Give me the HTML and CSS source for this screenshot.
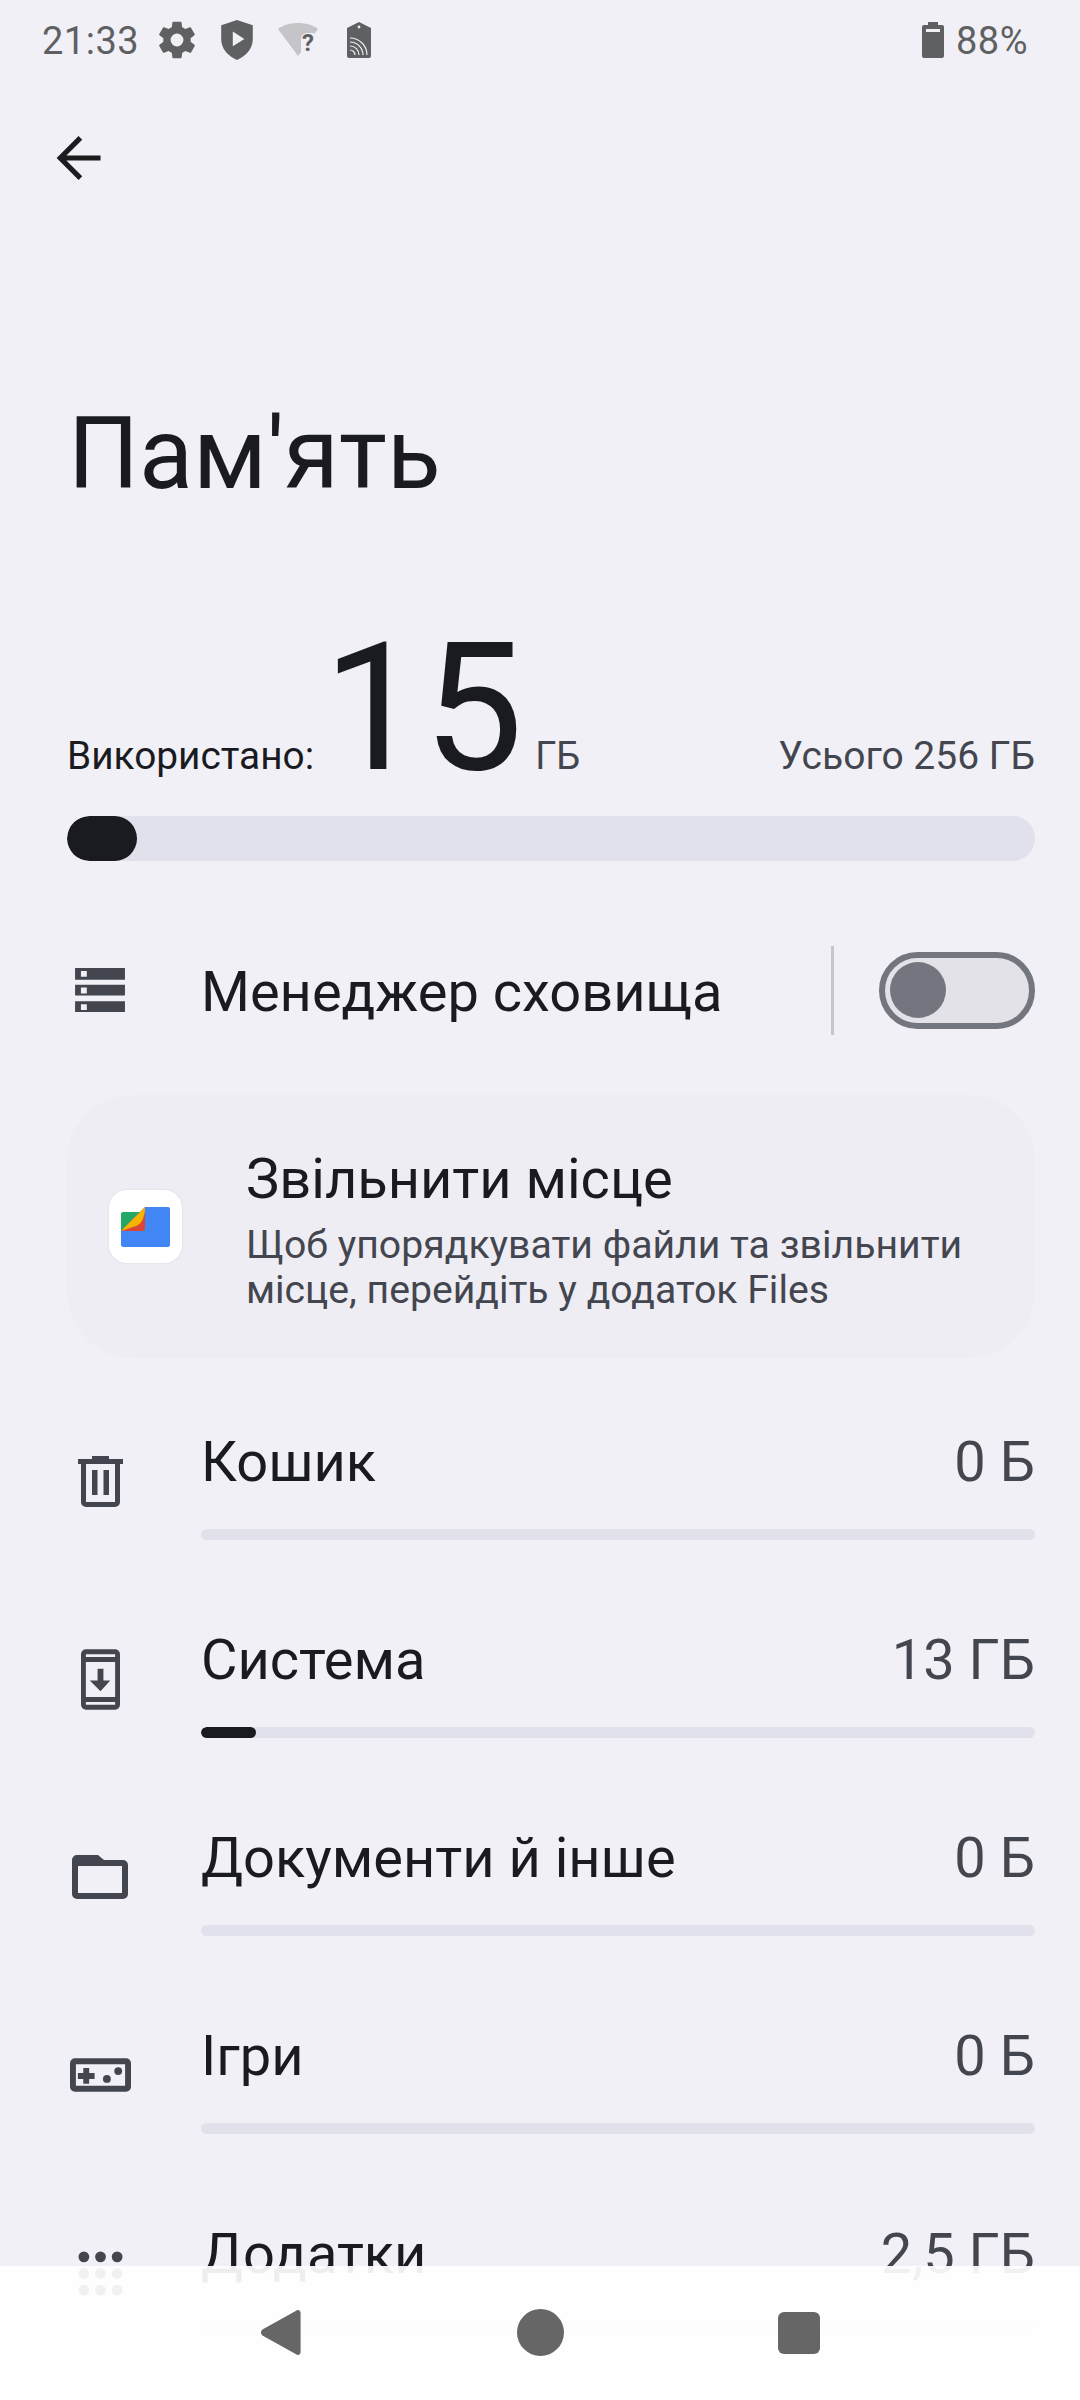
FILE: index.html
```html
<!DOCTYPE html>
<html lang="uk">
<head>
<meta charset="utf-8">
<title>Пам'ять</title>
<link rel="stylesheet" href="styles.css">
</head>
<body>
<div class="page">
  <div class="status">
    <div class="status-left">
      <span class="time">21:33</span>
      <svg class="si gear" viewBox="0 0 24 24"><path fill="#5f6062" fill-rule="evenodd" d="M19.4 13c.04-.33.1-.66.1-1s-.06-.67-.1-1l2.1-1.65c.2-.15.25-.42.12-.64l-2-3.46c-.12-.22-.39-.3-.61-.22l-2.49 1c-.52-.4-1.08-.73-1.69-.98l-.38-2.65A.49.49 0 0 0 14 2h-4c-.25 0-.46.18-.49.42l-.38 2.65c-.61.25-1.17.59-1.69.98l-2.49-1c-.23-.09-.49 0-.61.22l-2 3.46c-.13.22-.07.49.12.64L4.57 11c-.04.33-.07.66-.07 1s.03.67.07 1l-2.11 1.65c-.19.15-.24.42-.12.64l2 3.46c.12.22.39.3.61.22l2.49-1c.52.4 1.08.73 1.69.98l.38 2.65c.03.24.24.42.49.42h4c.25 0 .46-.18.49-.42l.38-2.65c.61-.25 1.17-.59 1.69-.98l2.49 1c.23.09.49 0 .61-.22l2-3.46c.12-.22.07-.49-.12-.64L19.4 13zM12 15.5a3.5 3.5 0 1 1 0-7 3.5 3.5 0 0 1 0 7z"/></svg>
      <svg class="si shield" viewBox="0 0 30 38"><path fill="#5f6062" fill-rule="evenodd" d="M15 0 30 5v13c0 9-6 16-15 20C6 34 0 27 0 18V5L15 0zM11 11v14l11-7-11-7z"/></svg>
      <svg class="si wifi" viewBox="0 0 40 40"><path fill="#c5c5c9" d="M0 9C5 5 12 3 20 3s15 2 20 6L20 36 0 9z"/><rect x="23" y="13" width="17" height="27" rx="6" fill="#f1f0f7"/><text x="24" y="31" class="q">?</text></svg>
      <svg class="si sim" viewBox="0 0 24 36"><path fill="#5f6062" d="M12 0 24 6v28a2 2 0 0 1-2 2H2a2 2 0 0 1-2-2V6z"/><circle cx="12" cy="5" r="1.4" fill="#f1f0f7"/><g fill="none" stroke="#f1f0f7" stroke-width="1.2"><path d="M3 16a17 17 0 0 1 17 17"/><path d="M3 20a13 13 0 0 1 13 13"/><path d="M3 24a9 9 0 0 1 9 9"/><path d="M3 28a5 5 0 0 1 5 5"/></g></svg>
    </div>
    <div class="status-right">
      <svg class="si batt" viewBox="0 0 22 36"><path fill="#5f6062" d="M6 0h10v3h4a2 2 0 0 1 2 2v29a2 2 0 0 1-2 2H2a2 2 0 0 1-2-2V5a2 2 0 0 1 2-2h4z"/><rect x="4" y="7" width="14" height="3" fill="#f1f0f7"/></svg>
      <span class="pct">88%</span>
    </div>
  </div>

  <div class="topbar">
    <svg class="back" viewBox="0 0 48 48"><path fill="none" stroke="#1c1c1e" stroke-width="5.4" d="M47 24H6M26 3 5 24l21 21"/></svg>
  </div>

  <h1 class="title">Пам'ять</h1>

  <div class="usage">
    <div class="usage-line">
      <span class="used-label">Використано:</span>
      <span class="used-num">15</span>
      <span class="used-unit">ГБ</span>
      <span class="total">Усього 256 ГБ</span>
    </div>
    <div class="track big"><div class="fill" style="width:70px"></div></div>
  </div>

  <div class="manager">
    <div class="ico">
      <svg viewBox="0 0 52 46" class="ic-storage"><path fill="#44464f" fill-rule="evenodd" d="M0 0h51v12H0zM6 3v6h6V3zM0 17h51v11H0zM6 20v6h6v-6zM0 34h51v11H0zM6 37v6h6v-6z"/></svg>
    </div>
    <span class="manager-label">Менеджер сховища</span>
    <span class="divider"></span>
    <span class="switch"><span class="knob"></span></span>
  </div>

  <div class="card">
    <div class="app-icon">
      <svg viewBox="0 0 49 40" class="files"><path fill="#4285f4" d="M24 0h23a2 2 0 0 1 2 2v36a2 2 0 0 1-2 2H2a2 2 0 0 1-2-2V24h24z"/><path fill="#24a866" d="M2 5h22v19H0V7a2 2 0 0 1 2-2z"/><path fill="#db4437" d="M24 0v21a3 3 0 0 1-3 3H0z"/><path fill="#f4b400" d="M24 0c0 3 0 5-1 8-1 5-3 9-8 11L0 24z"/></svg>
    </div>
    <div class="card-text">
      <div class="card-title">Звільнити місце</div>
      <div class="card-desc">Щоб упорядкувати файли та звільнити місце, перейдіть у додаток Files</div>
    </div>
  </div>

  <div class="rows">
    <div class="row">
      <div class="ico"><svg viewBox="0 0 45 51" class="ic-trash"><path fill="#44464f" fill-rule="evenodd" d="M14 0h17v3h14v5h-3v38a5 5 0 0 1-5 5H8a5 5 0 0 1-5-5V8H0V3h14zM8 8v38h29V8zM14 14h5.5v25H14zM25.5 14H31v25h-5.5z"/></svg></div>
      <div class="row-body"><div class="row-head"><span class="row-name">Кошик</span><span class="row-val">0 Б</span></div><div class="track"></div></div>
    </div>
    <div class="row">
      <div class="ico"><svg viewBox="0 0 40 62" class="ic-sys"><path fill="#44464f" fill-rule="evenodd" d="M5 0h30a5 5 0 0 1 5 5v52a5 5 0 0 1-5 5H5a5 5 0 0 1-5-5V5a5 5 0 0 1 5-5zM5 5v3h30V5zM5 13v36h30V13zM5 54v3h30v-3zM17 20h6v12h7L20 43 9 32h8z"/></svg></div>
      <div class="row-body"><div class="row-head"><span class="row-name">Система</span><span class="row-val">13 ГБ</span></div><div class="track"><div class="fill" style="width:55px"></div></div></div>
    </div>
    <div class="row">
      <div class="ico"><svg viewBox="0 0 56 44" class="ic-folder"><path fill="#44464f" fill-rule="evenodd" d="M5 0h21l6 5h19a5 5 0 0 1 5 5v29a5 5 0 0 1-5 5H5a5 5 0 0 1-5-5V5a5 5 0 0 1 5-5zM6 11v27h44V11z"/></svg></div>
      <div class="row-body"><div class="row-head"><span class="row-name">Документи й інше</span><span class="row-val">0 Б</span></div><div class="track"></div></div>
    </div>
    <div class="row">
      <div class="ico"><svg viewBox="0 0 62 34" class="ic-game"><path fill="#44464f" fill-rule="evenodd" d="M5 0h52a5 5 0 0 1 5 5v24a5 5 0 0 1-5 5H5a5 5 0 0 1-5-5V5a5 5 0 0 1 5-5zM6 6v22h50V6zM13.5 10h6v5H25v6h-5.5v5h-6v-5H8v-6h5.5z"/><circle cx="37.5" cy="21" r="4" fill="#44464f"/><circle cx="49" cy="13" r="4" fill="#44464f"/></svg></div>
      <div class="row-body"><div class="row-head"><span class="row-name">Ігри</span><span class="row-val">0 Б</span></div><div class="track"></div></div>
    </div>
    <div class="row">
      <div class="ico"><svg viewBox="0 0 46 46" class="ic-apps"><g fill="#44464f"><circle cx="6" cy="6" r="5.5"/><circle cx="23" cy="6" r="5.5"/><circle cx="40" cy="6" r="5.5"/><circle cx="6" cy="23" r="5.5"/><circle cx="23" cy="23" r="5.5"/><circle cx="40" cy="23" r="5.5"/><circle cx="6" cy="40" r="5.5"/><circle cx="23" cy="40" r="5.5"/><circle cx="40" cy="40" r="5.5"/></g></svg></div>
      <div class="row-body"><div class="row-head"><span class="row-name">Додатки</span><span class="row-val">2,5 ГБ</span></div><div class="track"></div></div>
    </div>
  </div>

  <div class="navbar">
    <svg class="nav-back" viewBox="0 0 42 48"><path fill="#666" d="M41 4v40c0 3-3 4-5 2L2 27c-2-2-2-4 0-6L36 2c2-2 5-1 5 2z"/></svg>
    <span class="nav-home"></span>
    <span class="nav-recent"></span>
  </div>
</div>
</body>
</html>
```
FILE: styles.css
```css
* { box-sizing: border-box; }
html, body { margin: 0; padding: 0; }
body { background: #f1f0f7; font-family: Roboto, "Noto Sans", sans-serif; color: #1a1b20; }
.page { position: relative; width: 1080px; height: 2400px; overflow: hidden; background: #f1f0f7; }

.status { height: 80px; display: flex; justify-content: space-between; align-items: center; padding: 0 52px 0 42px; color: #5f6062; }
.status-left, .status-right { display: flex; align-items: center; }
.time, .pct { font-size: 38px; line-height: 80px; letter-spacing: .5px; padding-top: 2px; }
.si { display: block; flex: none; }
.gear { width: 44px; height: 44px; margin-left: 16px; }
.shield { width: 32px; height: 40px; margin-left: 22px; }
.wifi { width: 40px; height: 40px; margin-left: 25px; }
.wifi .q { font: 700 24px Roboto, sans-serif; fill: #5f6062; }
.sim { width: 24px; height: 36px; margin-left: 29px; }
.batt { width: 22px; height: 36px; margin-right: 12px; }

.topbar { height: 156px; padding: 55px 0 0 55px; }
.back { display: block; width: 47px; height: 46px; }

.title { margin: 0; padding: 158px 0 0 68px; font-weight: 400; font-size: 99.5px; line-height: 120px; height: 383px; }

.usage { padding: 0 45px 0 67px; }
.usage-line { display: flex; align-items: baseline; height: 197px; }
.used-label { font-size: 38.8px; }
.used-num { font-size: 178px; line-height: 178px; margin-left: 9px; }
.used-unit { font-size: 38px; margin-left: 12px; color: #44464f; }
.total { font-size: 39px; margin-left: auto; color: #44464f; }
.track { height: 11px; border-radius: 6px; background: #e1e1eb; overflow: hidden; }
.track.big { height: 45px; border-radius: 23px; }
.fill { height: 100%; background: #1a1b20; border-radius: 23px; }

.manager { display: flex; align-items: center; height: 150px; margin-top: 54px; padding: 0 45px 0 67px; }
.ico { width: 134px; flex: none; display: flex; }
.ic-storage { width: 51px; height: 45px; margin-left: 8px; }
.manager-label { font-size: 56px; flex: 1; padding-top: 3px; }
.divider { width: 3px; height: 89px; background: #c6c6cb; margin-right: 45px; }
.switch { width: 156px; height: 77px; border: 6px solid #74767f; border-radius: 39px; background: #e2e2e8; padding: 5px; display: flex; align-items: center; }
.knob { width: 56px; height: 56px; border-radius: 50%; background: #74767f; }

.card { display: flex; align-items: center; margin: 30px 45px 0 67px; height: 263px; border-radius: 66px; background: #eeedf4; padding: 0 40px 0 42px; }
.app-icon { width: 73px; height: 73px; border-radius: 18px; background: #fff; display: flex; align-items: center; justify-content: center; flex: none; box-shadow: 0 0 3px rgba(0,0,0,.08); }
.files { width: 49px; height: 40px; }
.card-text { margin-left: 64px; margin-right: -10px; padding-top: 4px; }
.card-title { font-size: 56px; line-height: 68px; }
.card-desc { font-size: 39.2px; line-height: 45px; color: #44464f; margin-top: 10px; }

.rows { padding: 0 45px 0 67px; margin-top: 36px; }
.row { display: flex; height: 198px; }
.ico svg { display: block; }
.row .ico { padding-top: 62px; }
.row-body { flex: 1; }
.row-head { display: flex; justify-content: space-between; height: 135px; align-items: center; }
.row-name { font-size: 56px; }
.row-val { font-size: 56px; color: #44464f; }
.ic-trash { width: 45px; height: 51px; margin-left: 11px; }
.ic-sys { width: 39px; height: 61px; margin-left: 14px; margin-top: -5px; }
.ic-folder { width: 56px; height: 44px; margin-left: 5px; margin-top: 3px; }
.ic-game { width: 61px; height: 34px; margin-left: 3px; margin-top: 8px; }
.ic-apps { width: 45px; height: 45px; margin-left: 11px; margin-top: 3px; }

.navbar { position: absolute; left: 0; right: 0; bottom: 0; height: 134px; background: rgba(255,255,255,.925); }
.nav-back { position: absolute; left: 260px; top: 43px; width: 42px; height: 47px; }
.nav-home { position: absolute; left: 517px; top: 43px; width: 47px; height: 47px; border-radius: 50%; background: #666; }
.nav-recent { position: absolute; left: 778px; top: 46px; width: 42px; height: 42px; border-radius: 6px; background: #666; }
```
